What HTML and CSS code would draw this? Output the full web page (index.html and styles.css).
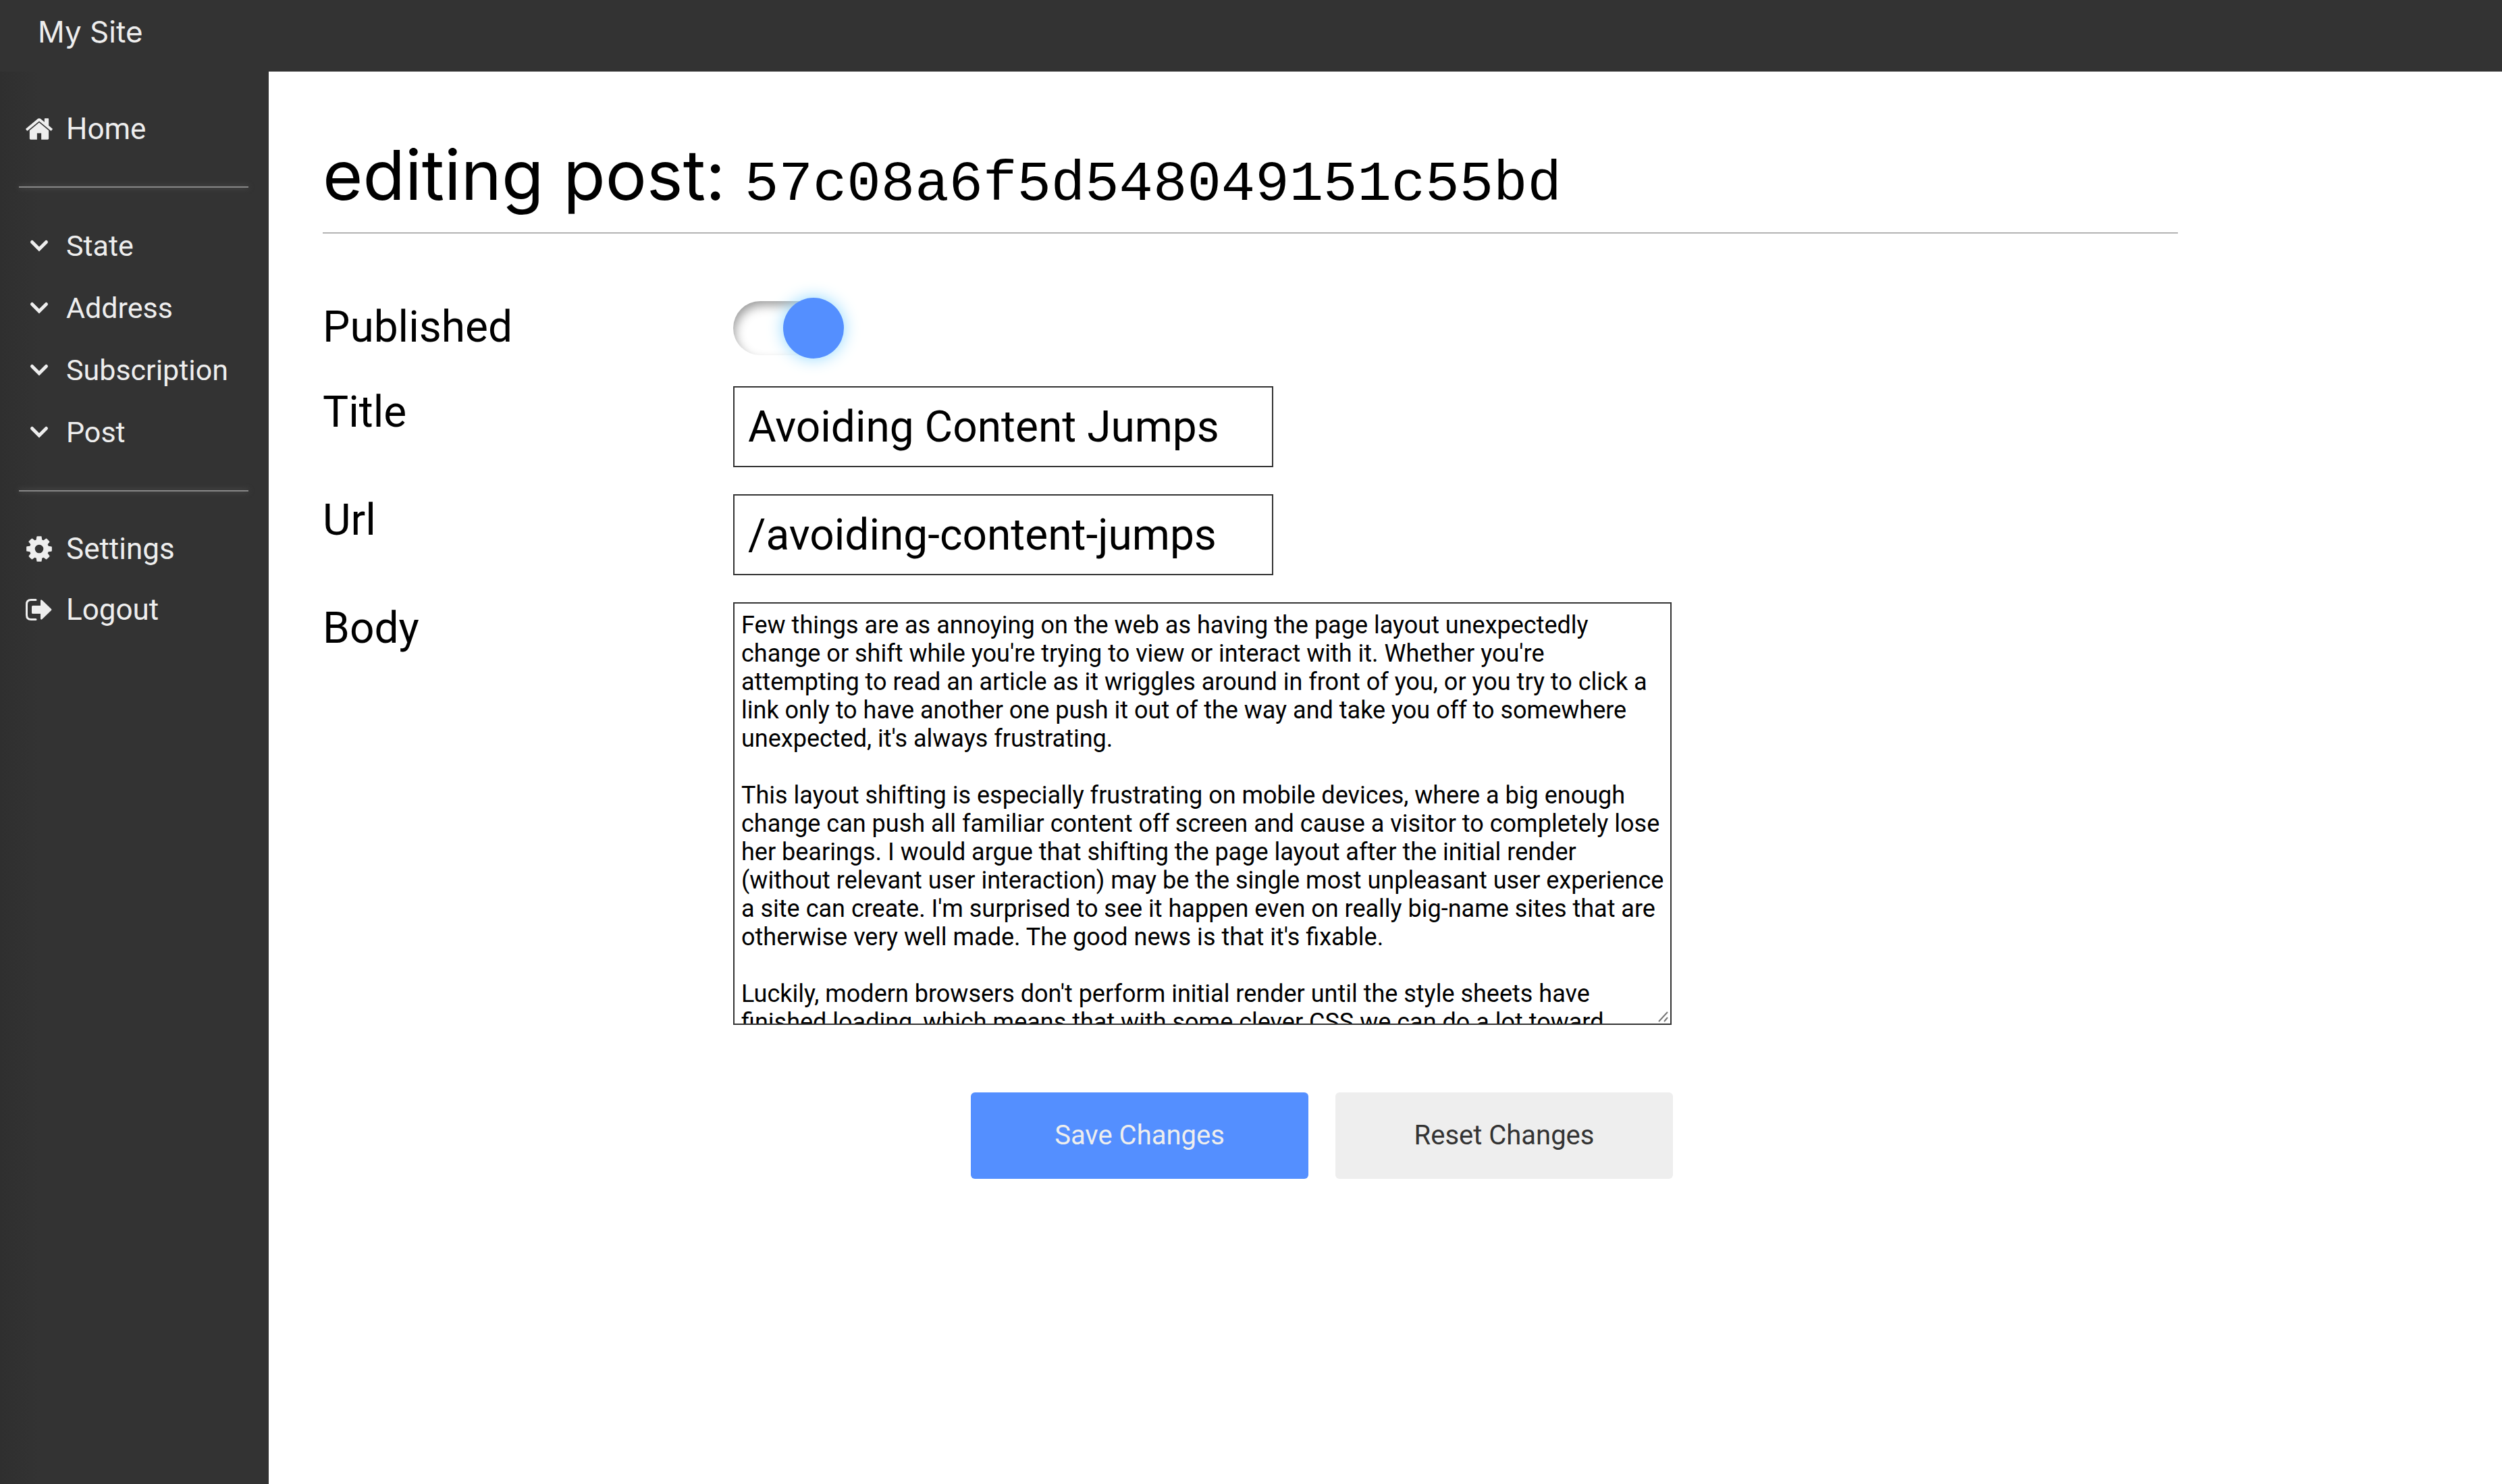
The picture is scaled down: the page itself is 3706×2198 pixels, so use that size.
FILE: index.html
```html
<!DOCTYPE html>
<html lang="en">
<head>
<meta charset="utf-8">
<title>My Site</title>
<link rel="stylesheet" href="styles.css">
</head>
<body>
<svg class="sprite" aria-hidden="true">
  <symbol id="home" viewBox="0 0 1792 1792"><path d="M1472 992v480q0 26-19 45t-45 19h-384v-384h-256v384h-384q-26 0-45-19t-19-45v-480q0-1 .5-3t.5-3l575-474 575 474q1 2 1 6zm223-69l-62 74q-8 9-21 11h-3q-13 0-21-7l-692-577-692 577q-12 8-24 7-13-2-21-11l-62-74q-8-10-7-23.500t11-21.500l719-599q32-26 76-26t76 26l244 204v-195q0-14 9-23t23-9h192q14 0 23 9t9 23v408l219 182q10 8 11 21.500t-7 23.500z"/></symbol>
  <symbol id="cog" viewBox="0 0 1792 1792"><path d="M1152 896q0-106-75-181t-181-75-181 75-75 181 75 181 181 75 181-75 75-181zm512-109v222q0 12-8 23t-20 13l-185 28q-19 54-39 91 35 50 107 138 10 12 10 25t-9 23q-27 37-99 108t-94 71q-12 0-26-9l-138-108q-44 23-91 38-16 136-29 186-7 28-36 28h-222q-14 0-24.500-8.500t-11.500-21.500l-28-184q-49-16-90-37l-141 107q-10 9-25 9-14 0-25-11-126-114-165-168-7-10-7-23 0-12 8-23 15-21 51-66.500t54-70.500q-27-50-41-99l-183-27q-13-2-21-12.500t-8-23.500v-222q0-12 8-23t19-13l186-28q14-46 39-92-40-57-107-138-10-12-10-24 0-10 9-23 26-36 98.500-107.500t94.500-71.500q13 0 26 10l138 107q44-23 91-38 16-136 29-186 7-28 36-28h222q14 0 24.500 8.500t11.500 21.500l28 184q49 16 90 37l142-107q9-9 24-9 13 0 25 10 129 119 165 170 7 8 7 22 0 12-8 23-15 21-51 66.500t-54 70.500q26 50 41 98l183 28q13 2 21 12.500t8 23.500z"/></symbol>
  <symbol id="chevron" viewBox="0 0 44 44"><path d="M11.500 16.500 22 27l10.500-10.500" fill="none" stroke="currentColor" stroke-width="5" stroke-linecap="round"/></symbol>
  <symbol id="logout" viewBox="0 0 44 44"><path d="M17 7.500H10Q3.500 7.500 3.500 14V30Q3.500 36.500 10 36.500H17" fill="none" stroke="currentColor" stroke-width="3" stroke-linecap="round"/><path d="M12.500 16H24V8.500Q24.500 6.500 26.500 8L40 21Q41 22 40 23L26.500 36Q24.500 37.500 24 35.500V28H12.500Q11 28 11 26.500V17.500Q11 16 12.500 16Z"/></symbol>
</svg>
<header class="topbar"><a class="brand" href="#">My Site</a></header>
<div class="shell">
  <nav class="sidebar">
    <a class="nav-link" href="#"><svg class="icon"><use href="#home"/></svg>Home</a>
    <hr class="nav-rule">
    <button class="nav-group" type="button"><svg class="icon"><use href="#chevron"/></svg>State</button>
    <button class="nav-group" type="button"><svg class="icon"><use href="#chevron"/></svg>Address</button>
    <button class="nav-group" type="button"><svg class="icon"><use href="#chevron"/></svg>Subscription</button>
    <button class="nav-group" type="button"><svg class="icon"><use href="#chevron"/></svg>Post</button>
    <hr class="nav-rule">
    <a class="nav-link" href="#"><svg class="icon"><use href="#cog"/></svg>Settings</a>
    <a class="nav-link" href="#"><svg class="icon"><use href="#logout"/></svg>Logout</a>
  </nav>
  <main class="main">
    <h1 class="title">editing post: <code class="post-id">57c08a6f5d548049151c55bd</code></h1>
    <form class="form">
      <label class="label" for="published">Published</label>
      <div class="field field-toggle"><input class="toggle" id="published" type="checkbox" role="switch" checked></div>
      <label class="label" for="title">Title</label>
      <div class="field"><input class="text" id="title" type="text" value="Avoiding Content Jumps"></div>
      <label class="label" for="url">Url</label>
      <div class="field"><input class="text" id="url" type="text" value="/avoiding-content-jumps"></div>
      <label class="label" for="body">Body</label>
      <div class="field field-body">
        <textarea class="body" id="body">Few things are as annoying on the web as having the page layout unexpectedly change or shift while you're trying to view or interact with it. Whether you're attempting to read an article as it wriggles around in front of you, or you try to click a link only to have another one push it out of the way and take you off to somewhere unexpected, it's always frustrating.

This layout shifting is especially frustrating on mobile devices, where a big enough change can push all familiar content off screen and cause a visitor to completely lose her bearings. I would argue that shifting the page layout after the initial render (without relevant user interaction) may be the single most unpleasant user experience a site can create. I'm surprised to see it happen even on really big-name sites that are otherwise very well made. The good news is that it's fixable.

Luckily, modern browsers don't perform initial render until the style sheets have finished loading, which means that with some clever CSS we can do a lot toward</textarea>
        <svg class="grip" viewBox="0 0 16 16" aria-hidden="true"><path d="M1 15 14 1M9 15l5-6" fill="none" stroke="#777" stroke-width="2"/></svg>
      </div>
      <div class="actions">
        <button class="btn btn-primary" type="submit">Save Changes</button>
        <button class="btn" type="reset">Reset Changes</button>
      </div>
    </form>
  </main>
</div>
</body>
</html>
```

FILE: styles.css
```css
* { box-sizing: border-box; }

body {
  margin: 0;
  min-height: 100vh;
  display: flex;
  flex-direction: column;
  background: #fff;
  color: #000;
  font-family: Roboto, "Liberation Sans", sans-serif;
}

.sprite { display: none; }

.topbar {
  height: 106px;
  padding: 20px 56px;
  background: #333;
}

.brand {
  color: #eee;
  font: 400 44px/54px Inter, sans-serif;
  text-decoration: none;
}

.shell {
  flex: 1;
  display: flex;
}

.sidebar {
  flex: 0 0 398px;
  display: flex;
  flex-direction: column;
  padding: 40px 30px 40px 28px;
  background: linear-gradient(to right, #2f2f2f, #333 60px);
}

.nav-link,
.nav-group {
  display: flex;
  align-items: center;
  gap: 18px;
  padding: 0 8px;
  border: 0;
  background: none;
  color: #eee;
  font-family: inherit;
  text-decoration: none;
}

.nav-link { height: 90px; font-size: 44px; }
.nav-group { height: 92px; font-size: 43px; }

.nav-rule {
  width: 100%;
  height: 2px;
  margin: 40px 0;
  border: 0;
  background: #888;
  box-shadow: 0 0 8px #666;
}

.icon {
  width: 44px;
  height: 44px;
  fill: currentColor;
}

.main {
  flex: 1;
  min-width: 0;
  padding: 86px 480px 80px 80px;
}

.title {
  margin: 0 0 100px;
  padding-bottom: 18px;
  border-bottom: 2px solid #b3b3b3;
  font: 400 102px/134px Inter, sans-serif;
}

.post-id { font: 84px/100px "Liberation Mono", monospace; }

.form {
  display: grid;
  grid-template-columns: 608px minmax(0, 1392px);
  row-gap: 40px;
}

.label { font-size: 64px; line-height: 77px; }
.field { display: flex; }
.field-toggle { height: 86px; }
.field-body { position: relative; max-width: 1390px; }

.toggle {
  appearance: none;
  display: flex;
  align-items: center;
  justify-content: flex-end;
  width: 160px;
  height: 80px;
  margin: 0;
  border-radius: 40px;
  background: #fff;
  box-shadow: inset 4px 8px 16px -2px #999;
}

.toggle::before {
  content: "";
  flex: none;
  width: 90px;
  height: 90px;
  margin-right: -4px;
  border-radius: 50%;
  background: #548fff;
  box-shadow: 0 0 24px #8fd8ff;
}

.text {
  width: 800px;
  height: 120px;
  padding: 0 20px;
  border: 2px solid #333;
  background: #fff;
  color: #000;
  font: 64px/75px Roboto, sans-serif;
}

.body {
  width: 100%;
  height: 626px;
  padding: 11px 6px 10px 10px;
  border: 2px solid #333;
  background: #fff;
  color: #000;
  font: 36px/42px Roboto, sans-serif;
  resize: none;
  scrollbar-width: none;
}

.grip {
  position: absolute;
  right: 4px;
  bottom: 4px;
  width: 16px;
  height: 16px;
}

.actions {
  grid-column: 2;
  display: flex;
  justify-content: flex-end;
  gap: 40px;
  padding-top: 60px;
}

.btn {
  width: 500px;
  height: 128px;
  border: 0;
  border-radius: 6px;
  background: #eee;
  color: #333;
  font: 40px/48px Roboto, sans-serif;
}

.btn-primary { background: #548fff; color: #eee; }
```
